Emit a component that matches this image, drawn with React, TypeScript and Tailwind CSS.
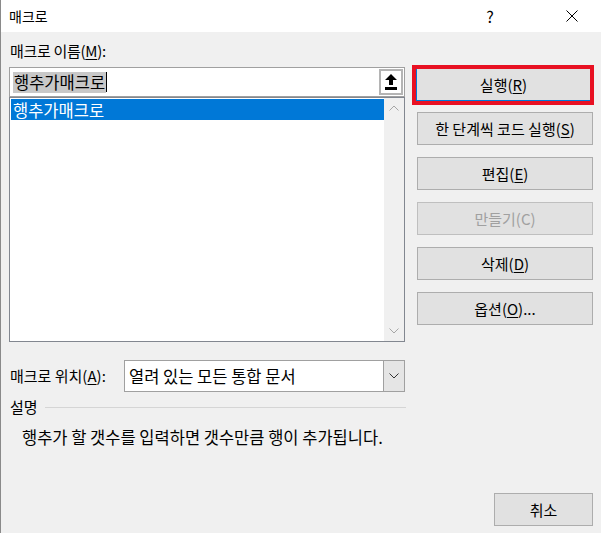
const font = { fontFamily: '"Noto Sans CJK KR", "Noto Sans", sans-serif' }

function Chevron({ up, className }: { up?: boolean; className?: string }) {
  return (
    <svg width="10" height="6" viewBox="0 0 10 6" className={className}>
      <path d={up ? 'M0.5 5.5 L5 1 L9.5 5.5' : 'M0.5 0.5 L5 5 L9.5 0.5'} fill="none" stroke="currentColor" strokeWidth="1" />
    </svg>
  )
}

function Btn({ children, disabled }: { children: React.ReactNode; disabled?: boolean }) {
  return (
    <div
      className={`w-[176px] h-[33px] ml-[5px] flex items-center justify-center bg-[#e1e1e1] border ${
        disabled ? 'border-[#bfbfbf] text-[#a0a0a0]' : 'border-[#adadad] text-black'
      }`}
    >
      {children}
    </div>
  )
}

export default function App() {
  return (
    <div className="w-[608px] h-[533px] flex bg-white text-[15px] leading-[20px] text-black" style={font}>
      <div className="w-[601px] h-full flex flex-col border-l border-[#8a8a8a]">
        {/* Title bar */}
        <div className="h-[32px] bg-white flex items-center pl-[8px] shrink-0">
          <span className="flex-1 text-[14px]">매크로</span>
          <span className="w-[14px] text-center mr-[69px] text-[16px]">?</span>
          <svg width="12" height="12" viewBox="0 0 12 12" className="mr-[23px]">
            <path d="M0.5 0.5 L11.5 11.5 M11.5 0.5 L0.5 11.5" stroke="#000" strokeWidth="1" />
          </svg>
        </div>

        {/* Body */}
        <div className="flex-1 bg-[#f0f0f0] flex flex-col">
          <div className="flex">
            <div className="w-[396px] ml-[8px] pt-[9px] flex flex-col">
              <div className="h-[20px] pl-[1px] tracking-[-0.3px]">
                매크로 이름(<span className="underline underline-offset-2">M</span>):
              </div>
              <div className="mt-[6px] h-[30px] bg-white border border-[#a0a0a0] flex items-center pl-[3px] pr-[1px] text-[16.5px]">
                <span className="bg-[#c8c8c8] px-[1px] leading-[21px]">행추가매크로</span>
                <span className="w-[1px] h-[20px] bg-black" />
                <div className="ml-auto w-[24px] h-[26px] border-2 border-[#b4b4b4] bg-white flex items-center justify-center">
                  <svg width="12" height="16" viewBox="0 0 12 16">
                    <path d="M6 0 L12 6 L8 6 L8 11 L4 11 L4 6 L0 6 Z" fill="#000" />
                    <rect x="0" y="13" width="12" height="3" fill="#000" />
                  </svg>
                </div>
              </div>
              <div className="h-[245px] bg-white border border-[#828790] flex">
                <div className="flex-1 pt-[1px] pl-[1px]">
                  <div className="h-[21px] bg-[#0078d7] text-white pl-[2px] flex items-center text-[16.5px]">행추가매크로</div>
                </div>
                <div className="w-[20px] bg-[#f0f0f0] flex flex-col items-center justify-between py-[7px] text-[#a6a6a6]">
                  <Chevron up />
                  <Chevron />
                </div>
              </div>
            </div>

            <div className="w-[182px] ml-[7px] pt-[33px] flex flex-col">
              <div className="h-[40px] border-4 border-[#e81123] flex">
                <div className="flex-1 bg-[#e1e1e1] border-l border-b border-[#0078d7] flex items-center justify-center">
                  실행(<span className="underline underline-offset-2">R</span>)
                </div>
              </div>
              <div className="mt-[7px] flex flex-col gap-[12px]">
                <Btn>
                  한 단계씩 코드 실행(<span className="underline underline-offset-2">S</span>)
                </Btn>
                <Btn>
                  편집(<span className="underline underline-offset-2">E</span>)
                </Btn>
                <Btn disabled>만들기(C)</Btn>
                <Btn>
                  삭제(<span className="underline underline-offset-2">D</span>)
                </Btn>
                <Btn>
                  옵션(<span className="underline underline-offset-2">O</span>)...
                </Btn>
              </div>
            </div>
          </div>

          {/* Macro location */}
          <div className="mt-[18px] h-[32px] flex items-center pl-[9px]">
            <span className="w-[114px]">
              매크로 위치(<span className="underline underline-offset-2">A</span>):
            </span>
            <div className="w-[281px] h-full bg-white border border-[#a0a0a0] flex items-center">
              <span className="flex-1 pl-[4px] text-[16.5px]">열려 있는 모든 통합 문서</span>
              <div className="w-[21px] h-full bg-[#e5e5e5] border-l border-[#a0a0a0] flex items-center justify-center text-[#333]">
                <Chevron />
              </div>
            </div>
          </div>

          {/* Description */}
          <div className="mt-[6px] h-[18px] flex items-center pl-[9px] pr-[195px]">
            <span>설명</span>
            <div className="flex-1 h-[1px] bg-[#d5d5d5] ml-[7px]" />
          </div>
          <div className="mt-[12px] pl-[21px] h-[18px] flex items-center text-[16.5px]">
            행추가 할 갯수를 입력하면 갯수만큼 행이 추가됩니다.
          </div>

          <div className="flex-1" />
          <div className="flex justify-end pr-[8px] pb-[7px]">
            <div className="w-[99px] h-[33px] bg-[#e1e1e1] border border-[#adadad] flex items-center justify-center">
              취소
            </div>
          </div>
        </div>
      </div>
    </div>
  )
}
